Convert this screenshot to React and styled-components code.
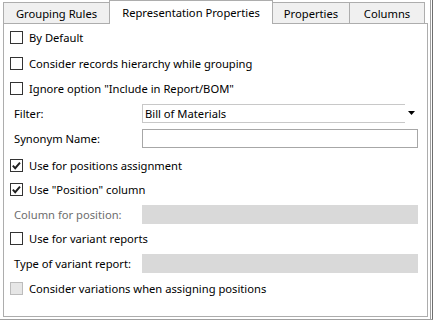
import styled, { createGlobalStyle } from "styled-components";

const GlobalStyle = createGlobalStyle`
  html, body {
    margin: 0;
    padding: 0;
    background: #ffffff;
  }
  body {
    font-family: "Noto Sans", "Liberation Sans", sans-serif;
    font-size: 11.2px;
    color: #000000;
  }
`;

// 바깥 창 테두리
const Window = styled.div`
  width: 433px;
  height: 320px;
  box-sizing: border-box;
  border-right: 1px solid #6e6e6e;
  border-bottom: 1px solid #a0a0a0;
  background: #ffffff;
  overflow: hidden;
`;

const Frame = styled.div`
  width: 431px;
  height: 319px;
  box-sizing: border-box;
  border-right: 1px solid #a0a0a0;
  padding-left: 3px;
`;

// 탭 줄
const TabStrip = styled.div`
  display: flex;
  align-items: flex-end;
  height: 24px;
  margin-bottom: -1px;
  position: relative;
  z-index: 1;
`;

const Tab = styled.div`
  box-sizing: border-box;
  width: ${(p) => p.$w}px;
  height: ${(p) => (p.$active ? 24 : 21)}px;
  margin-bottom: ${(p) => (p.$active ? 0 : 1)}px;
  margin-left: ${(p) => (p.$first ? 0 : -1)}px;
  border: 1px solid #adadad;
  border-bottom: none;
  background: ${(p) => (p.$active ? "#ffffff" : "#f0f0f0")};
  display: flex;
  align-items: center;
  justify-content: center;
  padding-bottom: ${(p) => (p.$active ? 1 : 0)}px;
  white-space: nowrap;
  position: relative;
  z-index: ${(p) => (p.$active ? 2 : 1)};
`;

const Panel = styled.div`
  width: 425px;
  height: 294px;
  box-sizing: border-box;
  border: 1px solid #adadad;
  padding: 1px 8px 0 6px;
  display: flex;
  flex-direction: column;
`;

const Row = styled.div`
  display: flex;
  align-items: center;
  height: 25px;
  flex-shrink: 0;
  margin-top: ${(p) => p.$mt || 0}px;
`;

const Box = styled.span`
  width: 13px;
  height: 13px;
  box-sizing: border-box;
  border: 1px solid ${(p) => (p.$disabled ? "#bcbcbc" : "#333333")};
  background: ${(p) => (p.$disabled ? "#e6e6e6" : "#ffffff")};
  display: inline-flex;
  align-items: center;
  justify-content: center;
  margin-right: 6px;
  flex-shrink: 0;
`;

const Caption = styled.span`
  white-space: nowrap;
`;

const Label = styled.span`
  width: 128px;
  padding-left: 4px;
  flex-shrink: 0;
  white-space: nowrap;
  color: ${(p) => (p.$disabled ? "#6d6d6d" : "#000000")};
`;

const Combo = styled.div`
  width: 276px;
  height: 19px;
  display: flex;
  align-items: center;
`;

const ComboField = styled.div`
  width: 263px;
  height: 19px;
  box-sizing: border-box;
  border: 1px solid #c8c8c8;
  border-right: none;
  padding-left: 2px;
  display: flex;
  align-items: center;
`;

const ComboArrow = styled.div`
  flex: 1;
  display: flex;
  justify-content: center;
  align-items: center;
  padding-bottom: 1px;
`;

const TextField = styled.div`
  width: 276px;
  height: 19px;
  box-sizing: border-box;
  border: 1px solid #a7a7a7;
  background: #ffffff;
`;

const GrayField = styled.div`
  width: 276px;
  height: 19px;
  background: #d9d9d9;
`;

function CheckBox({ label, checked, disabled, mt }) {
  return (
    <Row $mt={mt}>
      <Box $disabled={disabled}>
        {checked && (
          <svg width="11" height="11" viewBox="0 0 11 11">
            <polyline
              points="1.8,5.6 4.2,8.2 9,2.6"
              fill="none"
              stroke="#1f1f1f"
              strokeWidth="1.9"
            />
          </svg>
        )}
      </Box>
      <Caption>{label}</Caption>
    </Row>
  );
}

export default function App() {
  return (
    <>
      <GlobalStyle />
      <Window>
        <Frame>
          <TabStrip>
            <Tab $first $w={107}>Grouping Rules</Tab>
            <Tab $active $w={164}>Representation Properties</Tab>
            <Tab $w={78}>Properties</Tab>
            <Tab $w={76}>Columns</Tab>
          </TabStrip>
          <Panel>
            <CheckBox label="By Default" />
            <CheckBox label="Consider records hierarchy while grouping" mt={1} />
            <CheckBox label={'Ignore option "Include in Report/BOM"'} />
            <Row>
              <Label>Filter:</Label>
              <Combo>
                <ComboField>Bill of Materials</ComboField>
                <ComboArrow>
                  <svg width="7" height="4" viewBox="0 0 7 4">
                    <polygon points="0,0 7,0 3.5,4" fill="#000" />
                  </svg>
                </ComboArrow>
              </Combo>
            </Row>
            <Row>
              <Label>Synonym Name:</Label>
              <TextField />
            </Row>
            <CheckBox label="Use for positions assignment" checked mt={2} />
            <CheckBox label={'Use "Position" column'} checked mt={-1} />
            <Row>
              <Label $disabled>Column for position:</Label>
              <GrayField />
            </Row>
            <CheckBox label="Use for variant reports" mt={-1} />
            <Row>
              <Label>Type of variant report:</Label>
              <GrayField />
            </Row>
            <CheckBox label="Consider variations when assigning positions" disabled />
          </Panel>
        </Frame>
      </Window>
    </>
  );
}
